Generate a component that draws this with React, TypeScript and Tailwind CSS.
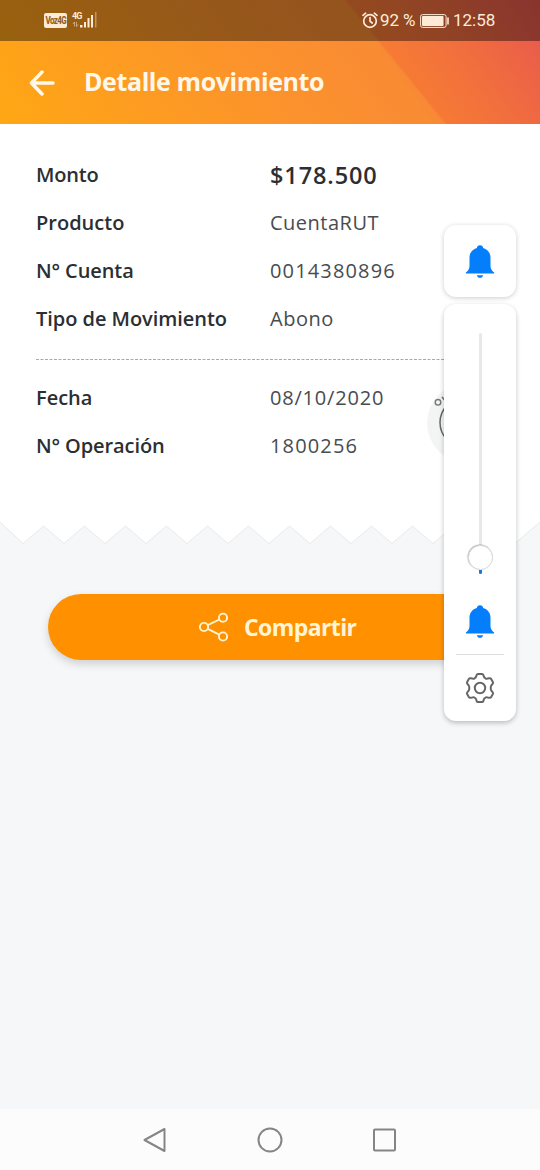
import React from 'react';

interface DetailRowProps {
  label: string;
  value: string;
  labelClass?: string;
  valueClass?: string;
}

const DetailRow: React.FC<DetailRowProps> = ({ label, value, labelClass = '', valueClass = '' }) => (
  <div className="flex h-12 items-center whitespace-nowrap text-[20px] text-[#2b2f33]">
    <dt className={`w-[234px] font-semibold ${labelClass}`}>{label}</dt>
    <dd className={valueClass || 'tracking-[0.5px] text-[#474c50]'}>{value}</dd>
  </div>
);

const BellIcon = () => (
  <svg width="30" height="34" viewBox="0 0 30 34" fill="#047efb">
    <path d="M12 3a3 2.8 0 0 1 6 0c4.5 1.2 7.5 4.800 7.500 9.500v8.500c0 3 1.600 5 3.400 6.300.6.500.4 1.200-.400 1.200H1.500c-.800 0-1-.700-.400-1.200C2.900 26 4.500 24 4.500 21v-8.500C4.500 7.800 7.500 4.200 12 3z" />
    <path d="M11.900 30.200h6.200c-.3 1.700-1.500 2.600-3.100 2.600s-2.800-.9-3.100-2.600z" />
  </svg>
);

const GearIcon = () => (
  <svg width="32" height="32" viewBox="0 0 32 32" fill="none" stroke="#666" strokeWidth="2" strokeLinejoin="round">
    <path d="M14 1.900h4q1 0 1.300 1l.6 1.800q.4 1.100 1.500 1.600 1 .6 2.100.3l2-.4q1-.2 1.500.6l1.900 3.300q.4.900-.2 1.600l-1.300 1.600q-.7.900-.7 2.700t.7 2.700l1.300 1.600q.6.700.2 1.600L27 25.200q-.5.800-1.500.6l-2-.4q-1.100-.3-2.100.3-1.100.5-1.500 1.600l-.6 1.800q-.3 1-1.300 1h-4q-1 0-1.300-1l-.6-1.800q-.4-1.100-1.500-1.600-1-.6-2.100-.3l-2 .4q-1 .2-1.500-.6l-1.900-3.300q-.4-.9.200-1.600l1.300-1.600q.7-.9.7-2.700t-.7-2.700l-1.300-1.600q-.6-.7-.2-1.600L5 6.800q.5-.8 1.500-.6l2 .4q1.100.3 2.100-.3 1.100-.5 1.500-1.600l.6-1.800q.3-1 1.300-1z" />
    <circle cx="16" cy="16" r="5.200" />
  </svg>
);

const StatusBar = () => (
  <div className="flex h-[41px] items-center bg-black/40 pl-[44px] pr-[45px] font-['Roboto',sans-serif] text-[#fdebd8]">
    <span className="flex h-[15px] w-[23px] items-center justify-center rounded-[2px] bg-[#fdebd8] text-[#91601a]">
      <span className="scale-x-[0.8] text-[10px] font-extrabold leading-none tracking-[-0.8px]">Voz4G</span>
    </span>
    <div className="ml-[5px] flex h-[17px] w-[26px] items-start">
      <span className="w-[9px] whitespace-nowrap text-[9px] font-bold leading-[8px] tracking-[-1px]">4G</span>
      <svg className="overflow-visible" width="17" height="17" viewBox="0 0 17 17" fill="#fdebd8">
        <rect x="-1" y="13" width="2.500" height="2.500" />
        <rect x="3" y="10" width="2" height="5.500" />
        <rect x="6.500" y="6" width="2" height="9.500" />
        <rect x="10" y="3" width="2" height="12.500" />
        <rect x="14" y="0" width="1.500" height="15.500" opacity=".4" />
        <path d="M-8 12l1.500-2v4.500M-4.500 10V14.500l1.500-2" fill="none" stroke="#fdebd8" opacity=".5" />
      </svg>
    </div>
    <div className="ml-auto flex items-center text-[17px] leading-none">
      <svg width="16" height="17" viewBox="0 0 16 17" fill="none" stroke="#fdebd8" strokeWidth="1.700" strokeLinecap="round">
        <circle cx="8" cy="9" r="6.300" />
        <path d="M8 5.500V9.200l2.200 1.800M1 3.300L3.600 1.200M15 3.300l-2.600-2.100" />
      </svg>
      <span className="ml-[2px] w-[38px] whitespace-nowrap text-[17px] tracking-[-0.1px]">92 %</span>
      <svg className="ml-[2px]" width="30" height="14" viewBox="0 0 30 14" fill="none">
        <rect x=".6" y=".6" width="25.500" height="12.800" rx="2" stroke="#fdebd8" />
        <rect x="2" y="2" width="21.500" height="10" rx=".8" fill="#fdebd8" />
        <path d="M28 3.500v7" stroke="#fdebd8" strokeWidth="1.600" />
      </svg>
      <span className="ml-[3px] w-[42px] whitespace-nowrap">12:58</span>
    </div>
  </div>
);

// Bank seal, partly hidden by the volume panel
const Seal = () => (
  <svg className="absolute left-[427px] top-[383px]" width="80" height="80" viewBox="0 0 80 80" fill="none">
    <circle cx="40" cy="40" r="40" fill="#f3f5f5" />
    <circle cx="37.500" cy="39.500" r="24.500" stroke="#666" strokeWidth="1.500" />
    <circle cx="11" cy="19.300" r="2.800" stroke="#777" strokeWidth="1.400" />
    <path d="M15 14l2.500 3" stroke="#777" strokeWidth="1.700" />
  </svg>
);

const VolumePanel = () => (
  <aside className="absolute left-[444px] top-[225px] flex w-[72px] flex-col gap-[7px]">
    <div className="flex h-[72px] items-center justify-center rounded-[12px] bg-white pt-[2px] shadow-[0_1px_5px_rgba(0,0,0,0.2)]">
      <BellIcon />
    </div>
    <div className="flex h-[417px] flex-col items-center rounded-[12px] bg-white pt-[29px] shadow-[0_2px_5px_rgba(0,0,0,0.24)]">
      <div className="h-[213px] w-[3px] rounded-full bg-[#e8e8e8]" />
      <div className="-mt-px size-[25px] rounded-full border border-[#dadada] bg-white shadow-[-0.5px_-0.5px_1px_rgba(0,0,0,0.3)]" />
      <div className="h-[4px] w-[3px] rounded-b-full bg-[#1779d4]" />
      <div className="mt-[31px]">
        <BellIcon />
      </div>
      <div className="mt-[15px] h-px w-12 bg-[#dedede]" />
      <div className="mt-[17px]">
        <GearIcon />
      </div>
    </div>
  </aside>
);

// Torn receipt edge along the bottom of the card
const ZIGZAG =
  'M0 -1L23 20.500' +
  Array.from({ length: 12 }, (_, i) => `L${43.5 + i * 41} 3L${64 + i * 41} 20.5`).join('') +
  'L540 -1';

export default function App() {
  return (
    <div className="relative flex h-[1170px] w-[540px] flex-col overflow-hidden bg-[#f5f7f9] font-['Open_Sans','Noto_Sans',sans-serif]">
      <header className="h-[124px] bg-[linear-gradient(51deg,transparent_69.4%,rgba(240,80,50,0.25)_69.8%,rgba(235,90,60,0.05)_100%),linear-gradient(55deg,#ffa714_0%,#fc932b_45%,#f98b34_69%,#e65551_100%)]">
        <StatusBar />
        <div className="flex h-[83px] items-center pl-[29px] text-[#fff8e9]">
          <svg width="26" height="26" viewBox="0 0 26 26" fill="none" stroke="currentColor" strokeWidth="3.500" strokeLinecap="round" strokeLinejoin="round">
            <path d="M13 2L2.500 13l10.500 11M3 13h21" />
          </svg>
          <h1 className="-mt-[2px] ml-[29px] whitespace-nowrap text-[25px] font-bold tracking-[-0.4px]">Detalle movimiento</h1>
        </div>
      </header>

      <main className="flex flex-1 flex-col">
        <section className="h-[399px] bg-white px-9 pt-[27px]">
          <dl>
            <DetailRow label="Monto" value="$178.500" labelClass="tracking-[-0.2px]" valueClass="pt-px text-[23.5px] font-semibold tracking-[0.9px]" />
            <DetailRow label="Producto" value="CuentaRUT" />
            <DetailRow label="N° Cuenta" value="0014380896" labelClass="tracking-[-0.1px]" valueClass="tracking-[1.15px] text-[#474c50]" />
            <DetailRow label="Tipo de Movimiento" value="Abono" labelClass="tracking-[-0.05px]" />
          </dl>
          <svg className="mt-[16px] block" width="468" height="1" viewBox="0 0 468 1">
            <path d="M0 .5H468" stroke="#aaa" strokeDasharray="3 1.500" />
          </svg>
          <dl className="mt-[14px]">
            <DetailRow label="Fecha" value="08/10/2020" valueClass="tracking-[0.8px] text-[#474c50]" />
            <DetailRow label="N° Operación" value="1800256" labelClass="tracking-[-0.1px]" valueClass="tracking-[1.15px] text-[#474c50]" />
          </dl>
        </section>
        <svg className="block overflow-visible" width="540" height="22" viewBox="0 0 540 22">
          <path d={ZIGZAG} fill="#fff" stroke="#e2e5e6" strokeWidth=".8" />
        </svg>
        <button className="mx-12 mt-[49px] flex h-[66px] items-center rounded-full bg-[#ff9100] pl-[150px] text-[#fff5d6] shadow-[0_4px_8px_rgba(0,0,0,0.16)]">
          <svg width="31" height="30" viewBox="0 0 31 30" fill="none" stroke="currentColor" strokeWidth="1.900">
            <circle cx="6" cy="15" r="4.100" />
            <circle cx="25" cy="5.700" r="4.100" />
            <circle cx="25" cy="24.500" r="4.100" />
            <path d="M9.700 13.200l11.600-5.700M9.700 16.900l11.600 5.800" />
          </svg>
          <span className="ml-[15px] whitespace-nowrap text-[23px] font-bold tracking-[-0.6px]">Compartir</span>
        </button>
      </main>

      <nav className="flex h-[61px] items-center bg-[#fcfcfc] pl-[143px]">
        <svg width="256" height="26" viewBox="0 0 256 26" fill="none" stroke="#858585" strokeWidth="2" strokeLinejoin="round">
          <path d="M21.500 2v22L1.500 13z" />
          <circle cx="127" cy="13" r="11.500" />
          <rect x="231" y="2.500" width="21" height="21" rx="1" />
        </svg>
      </nav>

      <Seal />
      <VolumePanel />
    </div>
  );
}
